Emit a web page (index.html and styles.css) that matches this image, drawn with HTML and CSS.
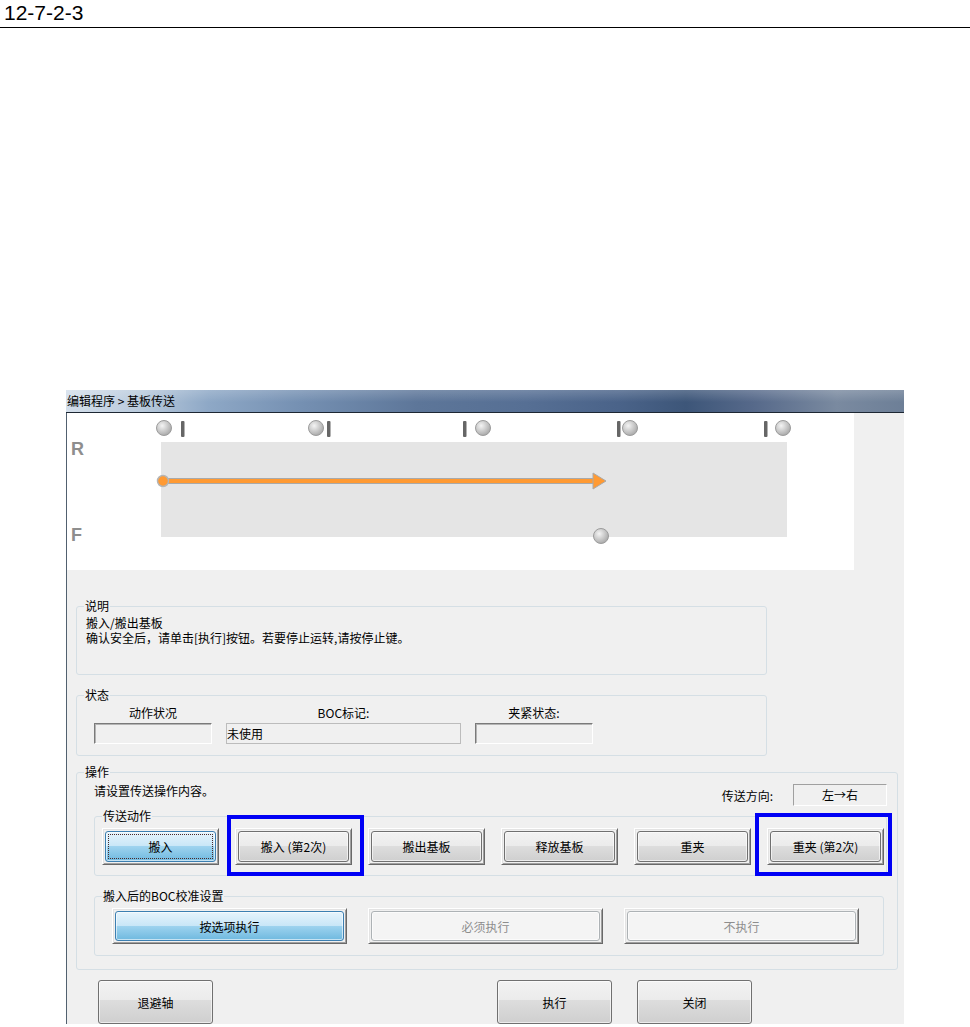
FILE: index.html
```html
<!DOCTYPE html>
<html lang="zh-CN">
<head>
  <meta charset="UTF-8">
  <title>基板传送</title>
  <link rel="stylesheet" href="styles.css">
</head>
<body>

  <div class="page-head">12-7-2-3</div>

  <div class="window">
    <div class="titlebar">编辑程序 &gt; 基板传送</div>

    <div class="view">
      <div class="canvas">
        <svg class="diagram" width="787" height="157" viewBox="0 0 787 157">
          <defs>
            <radialGradient id="ball" cx="38%" cy="35%" r="70%">
              <stop offset="0" stop-color="#f4f4f4"/>
              <stop offset="1" stop-color="#a6a6a6"/>
            </radialGradient>
          </defs>
          <rect x="94" y="29" width="626" height="95" fill="#e5e5e5"/>
          <text class="side" x="4" y="42">R</text>
          <text class="side" x="4" y="128">F</text>

          <!-- sensors, rear side -->
          <circle cx="97" cy="15" r="7.5" fill="url(#ball)" stroke="#9c9c9c"/>
          <rect x="114" y="8" width="3.5" height="16" rx="1" fill="#666"/>
          <circle cx="249" cy="15" r="7.5" fill="url(#ball)" stroke="#9c9c9c"/>
          <rect x="260" y="8" width="3.5" height="16" rx="1" fill="#666"/>
          <rect x="396" y="8" width="3.5" height="16" rx="1" fill="#666"/>
          <circle cx="416" cy="15" r="7.5" fill="url(#ball)" stroke="#9c9c9c"/>
          <rect x="550" y="8" width="3.5" height="16" rx="1" fill="#666"/>
          <circle cx="563" cy="15" r="7.5" fill="url(#ball)" stroke="#9c9c9c"/>
          <rect x="697" y="8" width="3.5" height="16" rx="1" fill="#666"/>
          <circle cx="716" cy="15" r="7.5" fill="url(#ball)" stroke="#9c9c9c"/>

          <!-- stopper, front side -->
          <circle cx="534" cy="123" r="7.5" fill="url(#ball)" stroke="#9c9c9c"/>

          <!-- transfer arrow -->
          <rect x="100" y="65" width="427" height="6" fill="#a9a9a9"/>
          <rect x="100" y="66" width="427" height="4" fill="#ff9a33"/>
          <polygon points="526,60 539,68 526,76" fill="#ff9a33" stroke="#a9a9a9"/>
          <circle cx="96" cy="68" r="5.5" fill="#ff9a33" stroke="#b5b5b5" stroke-width="1.5"/>
        </svg>
      </div>
    </div>

    <div class="panel">
      <fieldset class="group info">
        <legend>说明</legend>
        <p>搬入/搬出基板<br>确认安全后，请单击[执行]按钮。若要停止运转,请按停止键。</p>
      </fieldset>

      <fieldset class="group status">
        <legend>状态</legend>
        <div class="status-row">
          <div class="cell narrow">
            <span>动作状况</span>
            <div class="field sunken"></div>
          </div>
          <div class="cell wide">
            <span>BOC标记:</span>
            <div class="field flat">未使用</div>
          </div>
          <div class="cell narrow">
            <span>夹紧状态:</span>
            <div class="field sunken"></div>
          </div>
        </div>
      </fieldset>

      <fieldset class="group ops">
        <legend>操作</legend>
        <div class="ops-body">
          <div class="ops-top">
            <span class="hint">请设置传送操作内容。</span>
            <span class="dir-label">传送方向:</span>
            <div class="dir-field">左→右</div>
          </div>

          <fieldset class="group inner">
            <legend>传送动作</legend>
            <div class="btn-row">
              <div class="tbtn"><div class="face on focus">搬入</div></div>
              <div class="tbtn mark mark-a"><div class="face">搬入 (第2次)</div></div>
              <div class="tbtn"><div class="face">搬出基板</div></div>
              <div class="tbtn"><div class="face">释放基板</div></div>
              <div class="tbtn"><div class="face">重夹</div></div>
              <div class="tbtn mark mark-b"><div class="face">重夹 (第2次)</div></div>
            </div>
          </fieldset>

          <fieldset class="group inner boc">
            <legend>搬入后的BOC校准设置</legend>
            <div class="btn-row wide-row">
              <div class="tbtn big"><div class="face on">按选项执行</div></div>
              <div class="tbtn big"><div class="face off">必须执行</div></div>
              <div class="tbtn big"><div class="face off">不执行</div></div>
            </div>
          </fieldset>
        </div>
      </fieldset>

      <div class="actions">
        <div class="btn">退避轴</div>
        <div class="btn exec">执行</div>
        <div class="btn">关闭</div>
      </div>
    </div>
  </div>

</body>
</html>
```

FILE: styles.css
```css
* {
  box-sizing: border-box;
}
body {
  margin: 0;
  background: #fff;
  color: #000;
  font-family: "Noto Sans CJK SC", "Liberation Sans", sans-serif;
  font-size: 12px;
  overflow: hidden;
}
.page-head {
  height: 28px;
  padding-left: 4px;
  font: 21px/26px "Liberation Sans", Arial, sans-serif;
  border-bottom: 1px solid #000;
}

/* window */
.window {
  width: 838px;
  margin: 362px 0 0 66px;
}
.titlebar {
  height: 23px;
  padding-left: 1px;
  line-height: 22px;
  border-bottom: 1px solid #1d2733;
  background:
    linear-gradient(rgba(255, 255, 255, 0.18), rgba(255, 255, 255, 0) 55%),
    linear-gradient(90deg, #d4dfeb 0, #b9cadc 9%, #8ea8c6 17%, #7590b2 28%, #5d7699 42%, #566f94 55%, #4a6389 66%, #3d5679 74%, #56698a 82%, #7a8aa0 92%, #6d7f97 100%);
}
.view {
  display: flex;
  height: 157px;
  border-left: 1px solid #51606f;
  background: #f0f0f0;
}
.canvas {
  width: 787px;
  background: #fff;
}
.diagram {
  display: block;
}
.side {
  font: bold 18px "Liberation Sans", Arial, sans-serif;
  fill: #8e8e8e;
}
.panel {
  border-left: 1px solid #51606f;
  background: #f0f0f0;
  padding: 29px 0 0 9px;
}

/* group boxes */
.group {
  margin: 0;
  padding: 0;
  min-width: 0;
  border: 1px solid #d5dfe5;
  border-radius: 3px;
}
.group legend {
  margin-left: 7px;
  padding: 0 1px;
  line-height: 14px;
}
.info {
  width: 691px;
}
.info p {
  margin: 0;
  padding: 2px 0 29px 9px;
  line-height: 15px;
}
.status {
  width: 691px;
  margin-top: 13px;
}
.status-row {
  display: flex;
  gap: 14px;
  padding: 4px 0 11px 17px;
}
.cell {
  display: flex;
  flex-direction: column;
  align-items: center;
  line-height: 14px;
}
.cell.narrow {
  width: 118px;
}
.cell.wide {
  width: 235px;
}
.field {
  width: 100%;
  height: 21px;
  margin-top: 3px;
}
.field.sunken {
  border: 1px solid;
  border-color: #7a7a7a #fff #fff #7a7a7a;
  box-shadow: inset 1px 1px #b4b4b4;
}
.field.flat {
  border: 1px solid #bcbcbc;
  line-height: 19px;
}
.ops {
  width: 822px;
  margin-top: 9px;
}
.ops-body {
  padding: 5px 10px 13px 17px;
}
.ops-top {
  display: flex;
  align-items: center;
  height: 22px;
}
.hint {
  flex: 1;
  align-self: flex-start;
  line-height: 14px;
}
.dir-label {
  margin-right: 20px;
}
.dir-field {
  width: 94px;
  height: 22px;
  border: 1px solid;
  border-color: #a0a0a0 #fff #fff #a0a0a0;
  text-align: center;
  line-height: 20px;
}
.inner {
  margin-top: 3px;
}
.boc {
  margin-top: 13px;
  margin-right: 3px;
}

/* toggle buttons */
.btn-row {
  display: flex;
  gap: 16px;
  padding: 5px 0 10px 7px;
}
.wide-row {
  gap: 21px;
  padding: 5px 0 11px 17px;
}
.tbtn {
  width: 117px;
  height: 37px;
  padding: 2px;
  border: 1px solid;
  border-color: #fff #696969 #696969 #fff;
  box-shadow: inset 1px 1px #e3e3e3, inset -1px -1px #a0a0a0;
}
.tbtn.big {
  width: 235px;
  height: 36px;
}
.face {
  display: flex;
  align-items: center;
  justify-content: center;
  height: 100%;
  border: 1px solid #707070;
  border-radius: 3px;
  box-shadow: inset 0 0 0 1px rgba(255, 255, 255, 0.6);
  background: linear-gradient(#f2f2f2, #ebebeb 50%, #dddddd 50%, #cfcfcf);
}
.face.on {
  border-color: #3c7fb1;
  background: linear-gradient(#e6f4fc, #c8e6f7 50%, #9ed3ef 50%, #6fb9df);
}
.face.focus {
  outline: 1px dotted #4a2a2a;
  outline-offset: -4px;
}
.face.off {
  color: #8d8d8d;
  border-color: #adb2b5;
  background: #f4f4f4;
}
.mark {
  position: relative;
}
.mark::after {
  content: "";
  position: absolute;
  border: 4px solid #0000f5;
}
.mark-a::after {
  inset: -14px -13px -12px -9px;
}
.mark-b::after {
  inset: -16px -9px -12px -13px;
}

/* dialog buttons */
.actions {
  display: flex;
  padding: 10px 0 0 22px;
}
.btn {
  display: flex;
  align-items: center;
  justify-content: center;
  width: 115px;
  height: 44px;
  border: 1px solid #707070;
  border-radius: 3px;
  box-shadow: inset 0 0 0 1px rgba(255, 255, 255, 0.6);
  background: linear-gradient(#f2f2f2, #ebebeb 45%, #dddddd 45%, #cfcfcf);
}
.btn.exec {
  margin-left: 284px;
  margin-right: 25px;
}
```
